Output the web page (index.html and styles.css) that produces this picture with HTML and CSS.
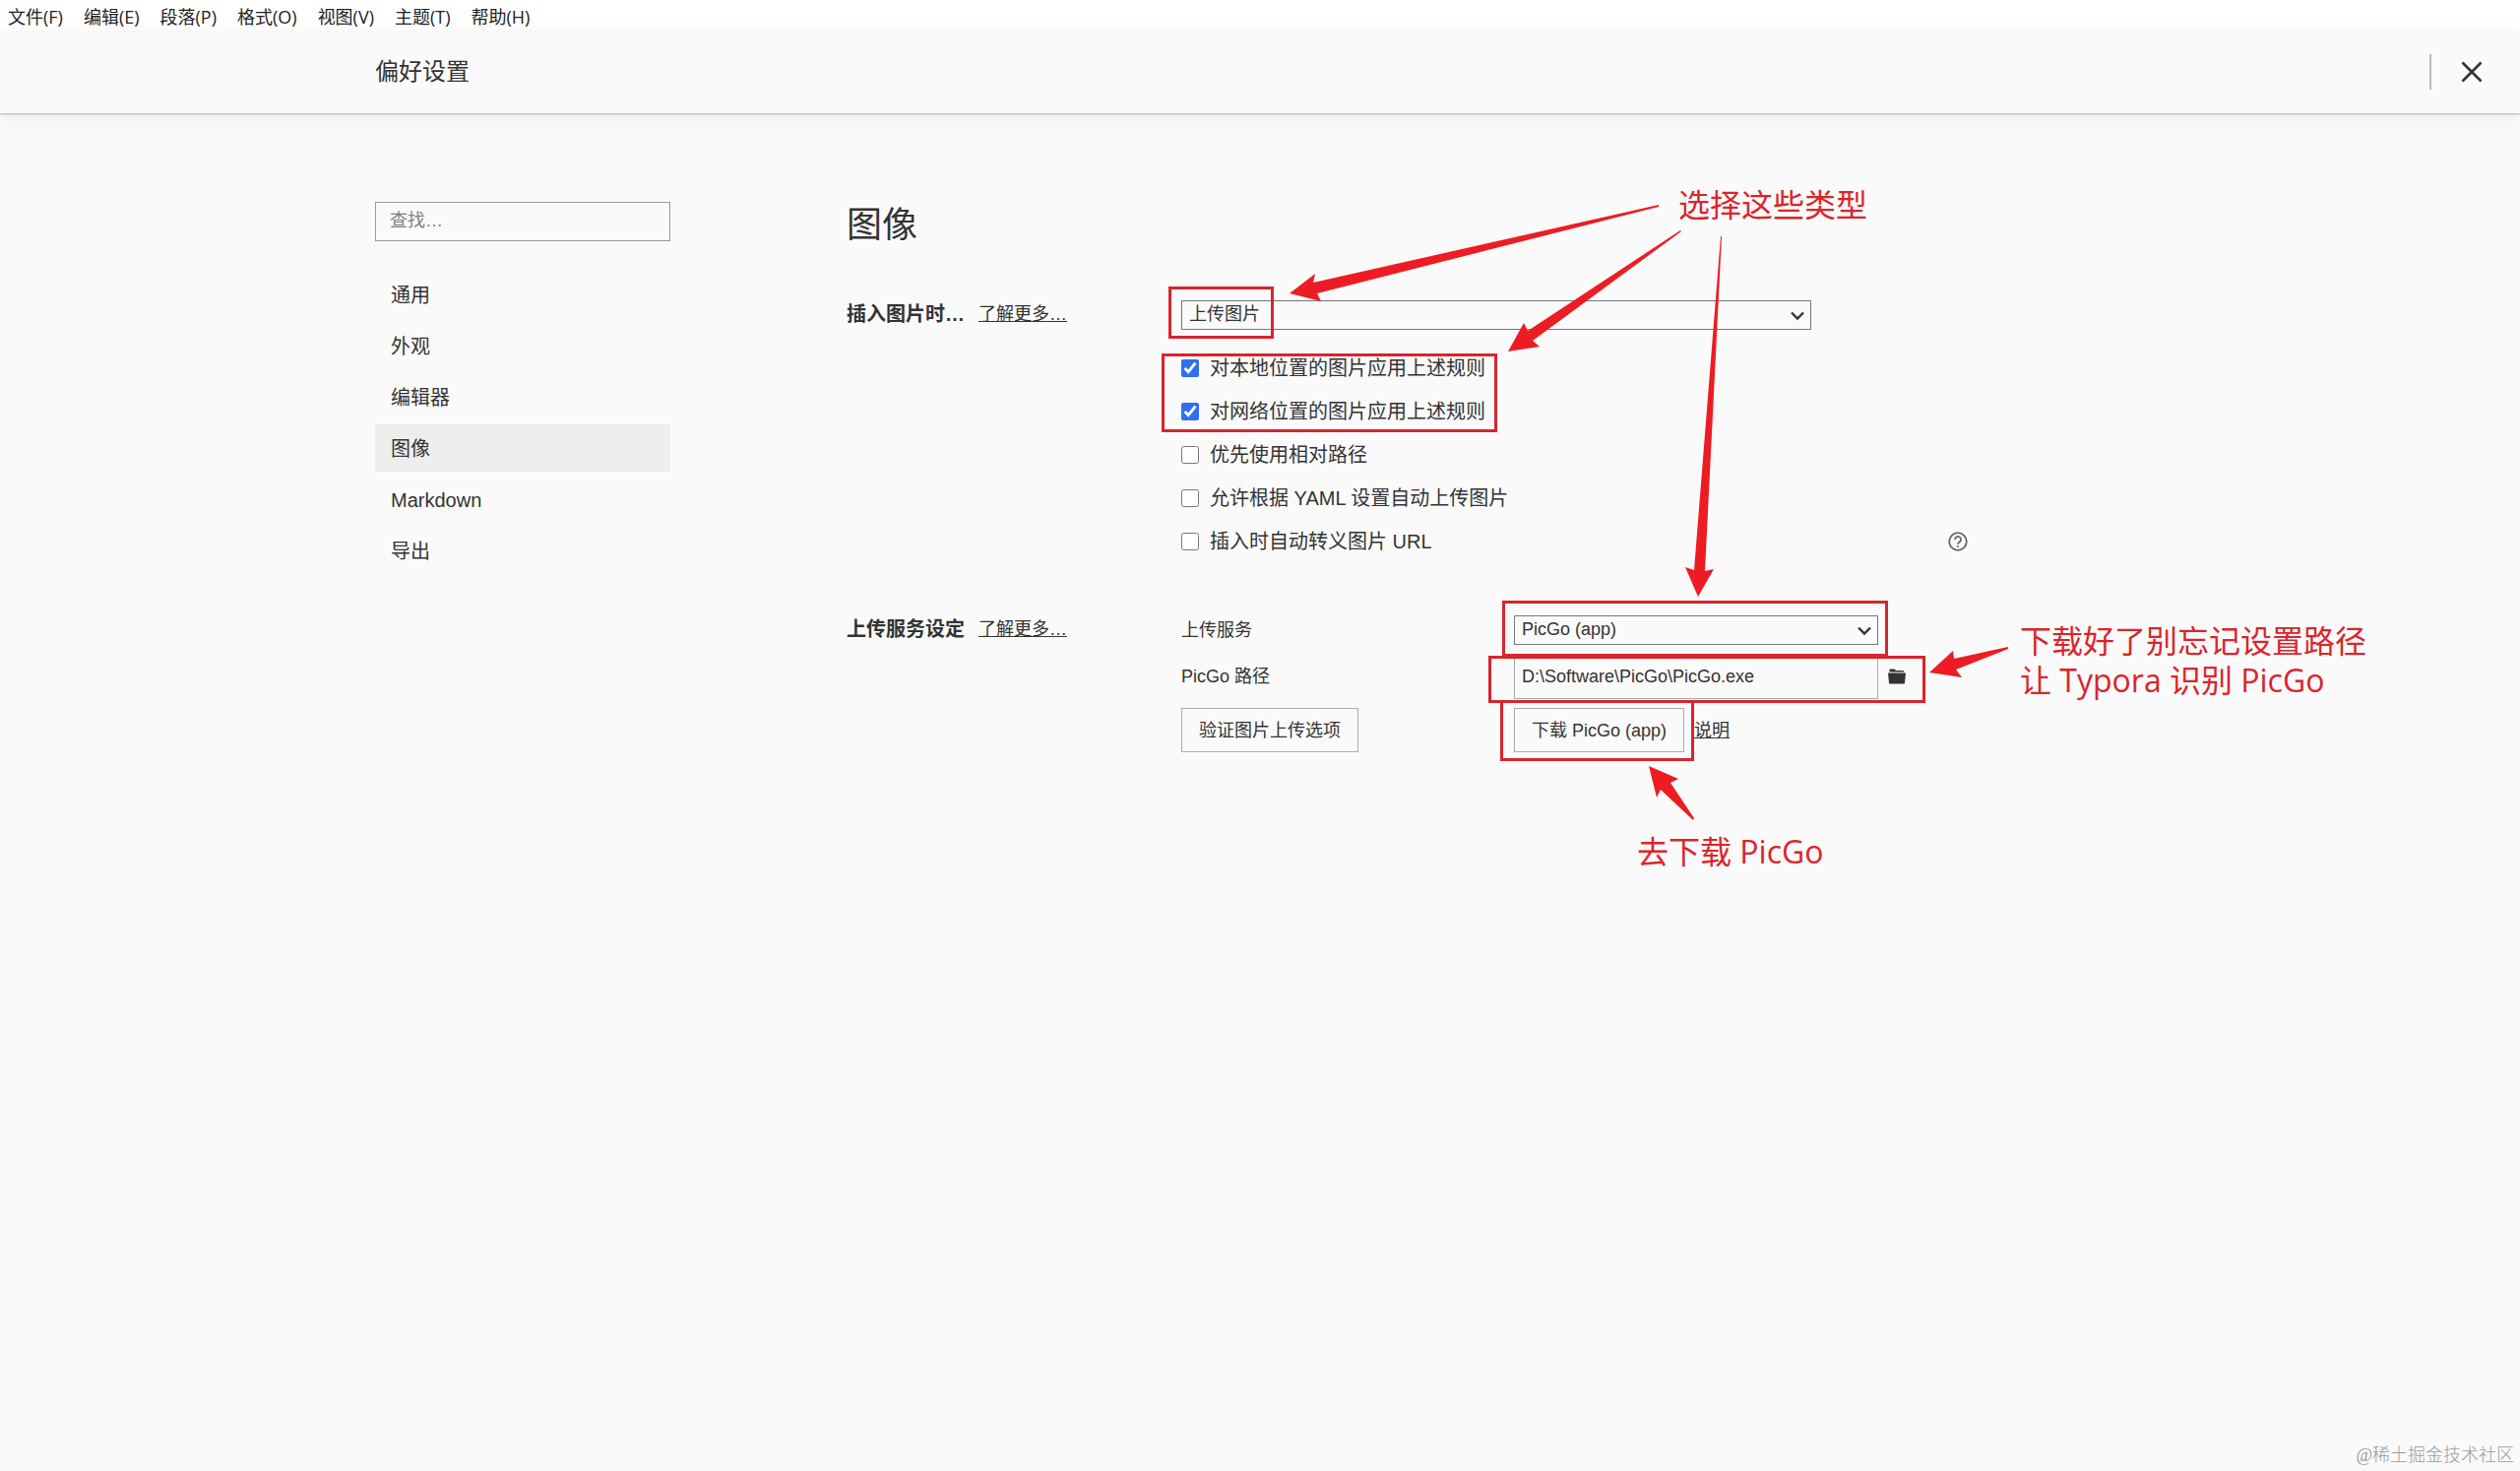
FILE: index.html
```html
<!DOCTYPE html>
<html lang="zh-CN">
<head>
<meta charset="utf-8">
<title>偏好设置</title>
<link rel="stylesheet" href="styles.css">
</head>
<body>
<nav class="menubar" aria-label="菜单">
  <button type="button">文件(F)</button>
  <button type="button">编辑(E)</button>
  <button type="button">段落(P)</button>
  <button type="button">格式(O)</button>
  <button type="button">视图(V)</button>
  <button type="button">主题(T)</button>
  <button type="button">帮助(H)</button>
</nav>
<header class="titlebar">
  <h1>偏好设置</h1>
  <button type="button" class="close" aria-label="关闭">
    <svg width="22" height="22" viewBox="0 0 22 22"><path d="M1.500 1.500 20.500 20.500M20.500 1.500 1.500 20.500" fill="none" stroke="#333" stroke-width="2.600"/></svg>
  </button>
</header>
<div class="layout">
  <aside class="sidebar">
    <input type="search" class="search" placeholder="查找…" aria-label="查找">
    <nav class="nav" aria-label="设置分类">
      <a href="#general">通用</a>
      <a href="#appearance">外观</a>
      <a href="#editor">编辑器</a>
      <a href="#image" class="active" aria-current="page">图像</a>
      <a href="#markdown">Markdown</a>
      <a href="#export">导出</a>
    </nav>
  </aside>
  <main class="content">
    <h2>图像</h2>
    <section class="group">
      <div class="group-label"><h3>插入图片时…</h3><a href="#insert">了解更多…</a></div>
      <div class="group-body">
        <div class="select wide">
          <select aria-label="插入图片时"><option>上传图片</option></select>
          <svg width="16" height="10" viewBox="0 0 16 10"><path d="M2 1.500 8 7.500 14 1.500" fill="none" stroke="#333" stroke-width="2.400"/></svg>
        </div>
        <div class="checks">
          <label class="check"><input type="checkbox" checked>对本地位置的图片应用上述规则</label>
          <label class="check"><input type="checkbox" checked>对网络位置的图片应用上述规则</label>
          <label class="check"><input type="checkbox">优先使用相对路径</label>
          <label class="check"><input type="checkbox">允许根据 YAML 设置自动上传图片</label>
          <div class="check-row">
            <label class="check"><input type="checkbox">插入时自动转义图片 URL</label>
            <button type="button" class="icon-button" aria-label="帮助">
              <svg width="20" height="20" viewBox="0 0 20 20"><circle cx="10" cy="10" r="8.800" fill="none" stroke="#666" stroke-width="1.800"/><path d="M7 8a3 3 0 1 1 4.700 2.400C10.600 11.200 10 11.600 10 12.700" fill="none" stroke="#666" stroke-width="1.800"/><circle cx="10" cy="15" r="1.100" fill="#666"/></svg>
            </button>
          </div>
        </div>
      </div>
    </section>
    <section class="group">
      <div class="group-label"><h3>上传服务设定</h3><a href="#upload">了解更多…</a></div>
      <div class="group-body service">
        <label for="service">上传服务</label>
        <div class="select">
          <select id="service"><option>PicGo (app)</option></select>
          <svg width="16" height="10" viewBox="0 0 16 10"><path d="M2 1.500 8 7.500 14 1.500" fill="none" stroke="#333" stroke-width="2.400"/></svg>
        </div>
        <label for="path">PicGo 路径</label>
        <div class="path">
          <input type="text" id="path" value="D:\Software\PicGo\PicGo.exe">
          <button type="button" class="icon-button" aria-label="选择文件">
            <svg width="18" height="16" viewBox="0 0 18 16"><path d="M1.500 3.500V1.200Q1.500.500 2.200.500H6.500L8 2H15.500Q16.300 2 16.300 3.500Z" fill="#333"/><path d="M0 4.500H18L17 14.500Q16.900 15.500 16 15.500H2Q1.100 15.500 1 14.500Z" fill="#333"/></svg>
          </button>
        </div>
        <div><button type="button" class="button">验证图片上传选项</button></div>
        <div class="download"><button type="button" class="button">下载 PicGo (app)</button><a href="#help">说明</a></div>
      </div>
    </section>
  </main>
</div>

<!-- Tutorial notes drawn over the settings window -->
<div class="notes">
  <svg class="arrows" width="2560" height="1494" viewBox="0 0 2560 1494">
    <g fill="none" stroke="#d9242c" stroke-width="3">
      <rect x="1188.500" y="292.500" width="104" height="50"/>
      <rect x="1181.500" y="360.500" width="338" height="77"/>
      <rect x="1527.500" y="611.500" width="389" height="54"/>
      <rect x="1513.500" y="667.500" width="441" height="45"/>
      <path d="M1525.500 712V771.500H1719.500V712"/>
    </g>
    <g fill="#ed1c24">
      <path d="M1685 208 1334 287 1336 278 1310 298 1342 306 1338 298 1685 210Z"/>
      <path d="M1707 234 1552 336 1548 328 1532 357 1564 352 1557 346 1708 235Z"/>
      <path d="M1748 240 1721 579 1712 576 1725 606 1741 578 1732 580 1749 240Z"/>
      <path d="M2040 657 1985 669 1984 661 1960 683 1993 688 1987 680 2040 659Z"/>
      <path d="M1675 778 1705 791 1697 795 1721 831 1720 833 1687 802 1683 810Z"/>
    </g>
  </svg>
  <p class="note note-types">选择这些类型</p>
  <p class="note note-path">下载好了别忘记设置路径<br>让 Typora 识别 PicGo</p>
  <p class="note note-download">去下载 PicGo</p>
  <p class="watermark">@稀土掘金技术社区</p>
</div>
</body>
</html>
```
FILE: styles.css
```css
* { box-sizing: border-box; }

body {
  margin: 0;
  min-height: 100vh;
  position: relative;
  background: #fafafa;
  color: #333;
  font: 18px/24px "Liberation Sans", "Noto Sans CJK SC", sans-serif;
}

h1, h2, h3, p { margin: 0; }
a { color: inherit; }
button, input, select { font: inherit; color: inherit; }
button { padding: 0; border: 0; background: none; }

.menubar {
  display: flex;
  gap: 21px;
  height: 33px;
  padding: 0 8px;
  background: #fff;
  color: #222;
  font-family: "Open Sans", "Noto Sans CJK SC", sans-serif;
}

.titlebar {
  display: flex;
  align-items: center;
  justify-content: space-between;
  height: 82px;
  padding: 0 38px 3px 381px;
  box-shadow: 0 1px 2px rgba(0, 0, 0, .3), 0 4px 24px rgba(0, 0, 0, .06);
}
.titlebar h1 { font-size: 24px; line-height: 32px; font-weight: 400; }
.close {
  display: flex;
  align-items: center;
  height: 36px;
  padding-left: 30px;
  border-left: 2px solid #bbb;
}

.layout { display: flex; gap: 179px; padding: 90px 0 0 381px; }

.sidebar { width: 300px; flex: none; }
.search {
  display: block;
  width: 100%;
  height: 40px;
  padding: 0 14px 2px;
  border: 1px solid #999;
  border-radius: 0;
  background: none;
  appearance: none;
}
.search::placeholder { color: #808080; }
.nav { display: flex; flex-direction: column; gap: 4px; margin-top: 30px; font-size: 20px; }
.nav a { padding: 13px 16px 11px; text-decoration: none; }
.nav .active { background: #eee; }

.content { flex: 1; }
.content h2 { font-size: 36px; line-height: 47px; font-weight: 400; }
.group { display: grid; grid-template-columns: 340px 1fr; margin-top: 53px; }
.group-label { display: flex; align-items: center; gap: 14px; height: 28px; }
.group-label h3 { font-size: 20px; line-height: 28px; }

.select { position: relative; height: 30px; }
.select.wide { width: 640px; }
.select select {
  display: block;
  width: 100%;
  height: 30px;
  padding: 0 7px 2px;
  border: 1px solid #777;
  border-radius: 0;
  background: none;
  appearance: none;
}
.select svg { position: absolute; right: 6px; top: 11px; pointer-events: none; }

.checks { margin-top: 17px; width: 799px; font-size: 20px; }
.check { display: flex; align-items: center; gap: 11px; height: 44px; }
.check input { width: 18px; height: 18px; margin: 0; accent-color: #2f6ff2; }
.check-row { display: flex; justify-content: space-between; align-items: center; }
.icon-button { display: flex; }

.service { display: grid; grid-template-columns: 338px 370px; row-gap: 9px; align-items: center; }
.path { display: flex; align-items: center; gap: 10px; margin-right: -38px; }
.path input {
  width: 370px;
  height: 46px;
  padding: 0 7px;
  border: 1px solid #aaa;
  background: none;
}
.button { height: 45px; padding: 0 17px; border: 1px solid #aaa; }
.download { display: flex; align-items: center; gap: 10px; }

.notes { position: absolute; inset: 0; overflow: hidden; pointer-events: none; }
.arrows { position: absolute; left: 0; top: 0; }
.note {
  position: absolute;
  color: #dc242b;
  font: 32px/40px "Open Sans", "Noto Sans CJK SC", sans-serif;
  white-space: nowrap;
}
.note-types { left: 1705px; top: 188px; }
.note-path { left: 2052px; top: 631px; }
.note-download { left: 1663px; top: 845px; }
.watermark {
  position: absolute;
  right: 6px;
  bottom: 4px;
  color: #999;
  font-family: "Liberation Serif", "Noto Sans CJK SC", serif;
  font-weight: 300;
}
```
